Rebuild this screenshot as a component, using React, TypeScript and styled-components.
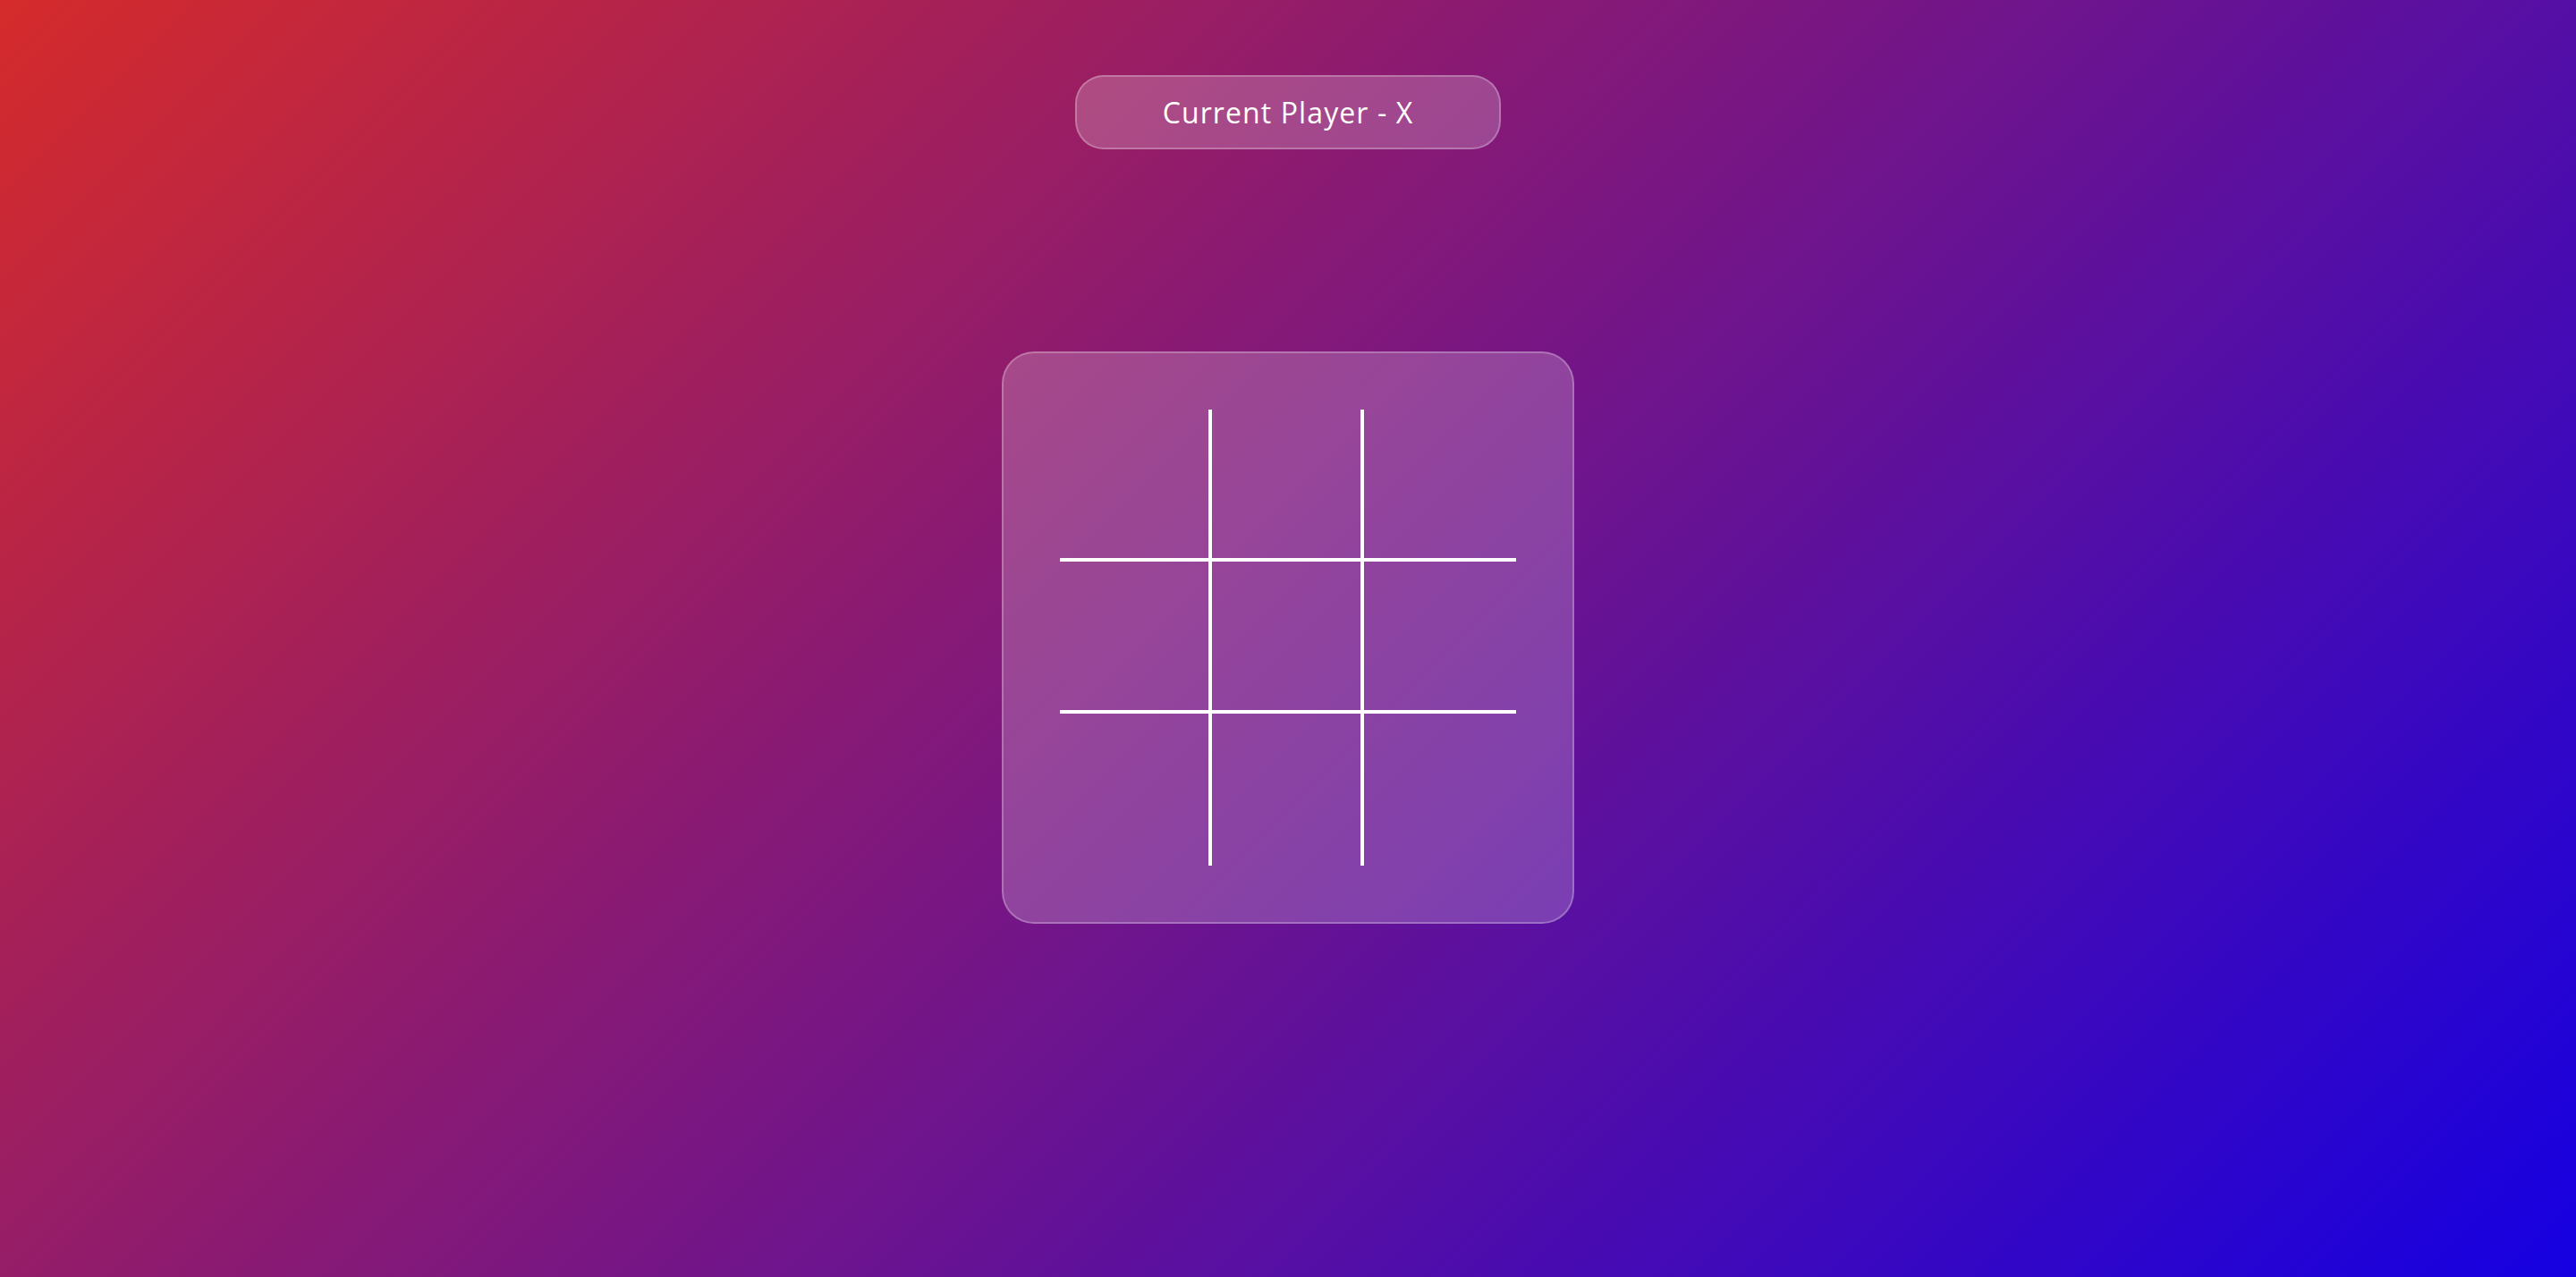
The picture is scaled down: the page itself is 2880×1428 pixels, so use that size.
import React, { useState } from "react";
import styled, { createGlobalStyle } from "styled-components";

const GlobalStyle = createGlobalStyle`
  html, body {
    margin: 0;
    padding: 0;
  }
  body {
    font-family: "Open Sans", "Liberation Sans", sans-serif;
    color: #fff;
  }
  * { box-sizing: border-box; }
`;

const Page = styled.main`
  min-height: 100vh;
  background: linear-gradient(135deg, #d52b2b 0%, #1500e2 100%);
  display: flex;
  flex-direction: column;
  align-items: center;
  padding-top: 84px;
`;

const StatusPill = styled.div`
  width: 476px;
  height: 83px;
  display: flex;
  align-items: center;
  justify-content: center;
  border-radius: 32px;
  background: rgba(255, 255, 255, 0.2);
  border: 2px solid rgba(255, 255, 255, 0.25);
  font-size: 32px;
  font-weight: 400;
  letter-spacing: 1.1px;
`;

const Board = styled.div`
  margin-top: 226px;
  width: 640px;
  height: 640px;
  border-radius: 36px;
  background: rgba(255, 255, 255, 0.2);
  border: 2px solid rgba(255, 255, 255, 0.25);
  display: flex;
  align-items: center;
  justify-content: center;
`;

const Grid = styled.div`
  width: 510px;
  height: 510px;
  display: grid;
  grid-template-columns: repeat(3, 1fr);
  grid-template-rows: repeat(3, 1fr);
`;

const Cell = styled.button<{ $right: boolean; $bottom: boolean }>`
  all: unset;
  cursor: pointer;
  display: flex;
  align-items: center;
  justify-content: center;
  font-family: "Open Sans", "Liberation Sans", sans-serif;
  font-size: 96px;
  color: #fff;
  border-right: ${(p) => (p.$right ? "4px solid #fff" : "none")};
  border-bottom: ${(p) => (p.$bottom ? "4px solid #fff" : "none")};
`;

export default function App() {
  const [cells, setCells] = useState<string[]>(Array(9).fill(""));
  const [player, setPlayer] = useState<"X" | "O">("X");

  const play = (i: number) => {
    if (cells[i]) return;
    const next = cells.slice();
    next[i] = player;
    setCells(next);
    setPlayer(player === "X" ? "O" : "X");
  };

  return (
    <>
      <GlobalStyle />
      <Page>
        <StatusPill>Current Player - {player}</StatusPill>
        <Board>
          <Grid>
            {cells.map((c, i) => (
              <Cell
                key={i}
                $right={i % 3 !== 2}
                $bottom={i < 6}
                onClick={() => play(i)}
              >
                {c}
              </Cell>
            ))}
          </Grid>
        </Board>
      </Page>
    </>
  );
}
